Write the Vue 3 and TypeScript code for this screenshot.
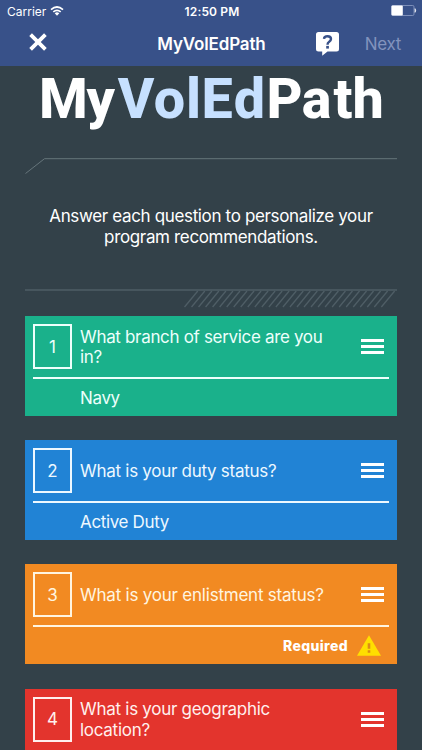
<script setup lang="ts">
interface Question {
  id: number
  text: string
  answer?: string
  tone: string
  fit: string
}

const questions: Question[] = [
  { id: 1, text: 'What branch of service are you in?', answer: 'Navy', tone: 'green', fit: 'tight' },
  { id: 2, text: 'What is your duty status?', answer: 'Active Duty', tone: 'blue', fit: 'normal' },
  { id: 3, text: 'What is your enlistment status?', tone: 'orange', fit: 'loose' },
  { id: 4, text: 'What is your geographic location?', answer: '', tone: 'red', fit: 'normal' },
]

const hatches: number[] = Array.from({ length: 29 }, (_, i) => 159.5 + i * 7.03)
</script>

<template>
  <div class="screen">
    <header class="top">
      <div class="status">
        <div class="carrier">
          <span>Carrier</span>
          <svg width="14" height="10" viewBox="0 0 14 10" fill="none" stroke="#fff" stroke-width="1.7">
            <path d="M1 3.6Q7-1.6 13 3.6M3.3 5.9Q7 2.7 10.7 5.9" />
            <path d="M4.7 7.2Q7 5.3 9.3 7.2L7 9.7Z" fill="#fff" stroke="none" />
          </svg>
        </div>
        <span class="clock">12:50 PM</span>
        <svg class="battery" width="26" height="12" viewBox="0 0 26 12">
          <rect x=".5" y=".5" width="22.5" height="10" rx="1.3" fill="none" stroke="#8f9fc6" stroke-width=".8" />
          <rect x=".5" y=".5" width="11.3" height="10" rx="1" fill="#fff" />
          <path d="M24 3.6Q25.4 5.5 24 7.4Z" fill="#fff" stroke="#fff" stroke-width=".6" />
        </svg>
      </div>
      <nav class="bar">
        <svg class="close" width="18" height="18" viewBox="0 0 18 18" stroke="#fff" stroke-width="3.8">
          <path d="M1.6 1.6L16.4 16.4M16.4 1.6L1.6 16.4" />
        </svg>
        <h1>MyVolEdPath</h1>
        <div class="actions">
          <svg width="23" height="24" viewBox="0 0 23 24">
            <path d="M2.5 0H20.5Q23 0 23 2.5V17Q23 19.5 20.5 19.5H11.5L6.2 23.8V19.5H2.5Q0 19.5 0 17V2.5Q0 0 2.5 0Z" fill="#fff" />
            <path d="M8 6.9Q8.2 4.3 11.5 4.3Q15 4.3 15 7.1Q15 8.6 13.2 9.7Q11.5 10.7 11.5 12.7" fill="none" stroke="#385189" stroke-width="2.4" />
            <rect x="10.2" y="13.9" width="2.7" height="2.7" fill="#385189" />
          </svg>
          <span class="next">Next</span>
        </div>
      </nav>
    </header>

    <main>
      <svg class="logo" width="372" height="64" viewBox="0 0 372 64">
        <text class="wordmark" y="52.3" fill="#fff">
          <tspan x="14 61.5">My</tspan><tspan x="92.7 128.7 161" fill="#c6e0ff">Vol</tspan><tspan x="176.5 208.7" fill="#c6e0ff">Ed</tspan><tspan x="241.5 276.7 308.5 327.5">Path</tspan>
        </text>
      </svg>
      <svg class="rule" width="372" height="18" viewBox="0 0 372 18" fill="none" stroke="#66757b">
        <path d="M.5 16.5L19.5 1.7H372" />
      </svg>
      <p class="intro">Answer each question to personalize your<br>program recommendations.</p>
      <svg class="rule-low" width="372" height="19" viewBox="0 0 372 19" fill="none" stroke="#4f5e66">
        <path d="M0 1H372" stroke-width="1.6" />
        <path v-for="x in hatches" :key="x" :d="`M${x} 18L${x + 13.3} 2`" stroke-width="1.3" />
      </svg>

      <section class="cards">
        <article v-for="q in questions" :key="q.id" class="card" :class="q.tone">
          <div class="question">
            <div class="number">{{ q.id }}</div>
            <div class="text" :class="q.fit">{{ q.text }}</div>
            <div class="menu"><i /><i /><i /></div>
          </div>
          <div v-if="q.answer !== undefined" class="answer">{{ q.answer }}</div>
          <div v-else class="required">
            <span>Required</span>
            <svg width="24" height="21" viewBox="0 0 24 21">
              <path d="M12 .3L24 20.7H0Z" fill="#ffdf00" />
              <path d="M10.7 8.3H13.3V13.8H10.7ZM10.7 15.3H13.3V17.7H10.7Z" fill="#dc8c16" />
            </svg>
          </div>
        </article>
      </section>
    </main>
  </div>
</template>

<style>
body { overflow: hidden; background: #334149; }
</style>

<style scoped>
* { box-sizing: border-box; }
.screen {
  width: 422px;
  height: 750px;
  overflow: hidden;
  background: #334149;
  color: #fff;
  font-family: Inter, "Liberation Sans", sans-serif;
}
svg { display: block; flex: none; }
.top { height: 66px; background: #385189; }
.status {
  display: grid;
  grid-template-columns: 1fr auto 1fr;
  align-items: center;
  height: 22px;
  padding: 0 5px 0 7px;
  font-size: 12px;
}
.carrier { display: flex; align-items: center; gap: 4px; letter-spacing: 0; }
.clock { font-weight: 600; letter-spacing: .15px; }
.battery { justify-self: end; }
.bar {
  display: grid;
  grid-template-columns: 1fr auto 1fr;
  align-items: center;
  height: 43px;
  padding: 0 21px 0 29px;
}
.close { margin-bottom: 3px; }
h1 { margin: 0 0 0 -7px; font-size: 17px; font-weight: 600; letter-spacing: -.15px; line-height: 22px; }
.actions { display: flex; justify-content: flex-end; align-items: center; gap: 26px; }
.next { color: #8293bd; font-size: 17px; letter-spacing: -.3px; }
main { padding: 0 25px; }
.logo { overflow: visible; }
.wordmark { font-family: Roboto, sans-serif; font-size: 55.7px; font-weight: 800; }
.rule { margin-top: 27px; }
.intro {
  margin: 31px 0 0;
  font-size: 17px;
  line-height: 20.5px;
  letter-spacing: -.35px;
  text-align: center;
  white-space: nowrap;
}
.rule-low { margin-top: 41.5px; }
.cards { display: flex; flex-direction: column; gap: 24.2px; margin-top: 8.5px; }
.card { height: 100px; padding: 8px; flex: none; font-size: 17px; }
.green { background: #1ab18b; color: #edfffb; }
.blue { background: #2183d5; color: #edf8ff; }
.orange { background: #f28a22; color: #fff5e0; }
.red { background: #e3342d; color: #fff0ee; }
.question {
  display: flex;
  align-items: center;
  height: 55px;
  padding-bottom: 8px;
  border-bottom: 2px solid currentColor;
}
.number {
  display: flex;
  align-items: center;
  justify-content: center;
  width: 39px;
  height: 45px;
  border: 2px solid currentColor;
}
.text { width: 256px; margin-left: 8px; padding-top: 1px; line-height: 20.5px; }
.tight { letter-spacing: -.33px; }
.normal { letter-spacing: -.28px; }
.loose { letter-spacing: -.22px; }
.menu { display: flex; flex-direction: column; gap: 3px; width: 23px; margin-left: 25px; }
.menu i { height: 3px; background: #fff; }
.answer { padding: 9px 0 0 47px; line-height: 21px; letter-spacing: -.35px; }
.required {
  display: flex;
  align-items: center;
  justify-content: flex-end;
  gap: 9px;
  padding: 8px 8px 0 0;
  color: #fff;
  font-size: 14px;
  font-weight: 800;
  letter-spacing: .35px;
}
</style>
